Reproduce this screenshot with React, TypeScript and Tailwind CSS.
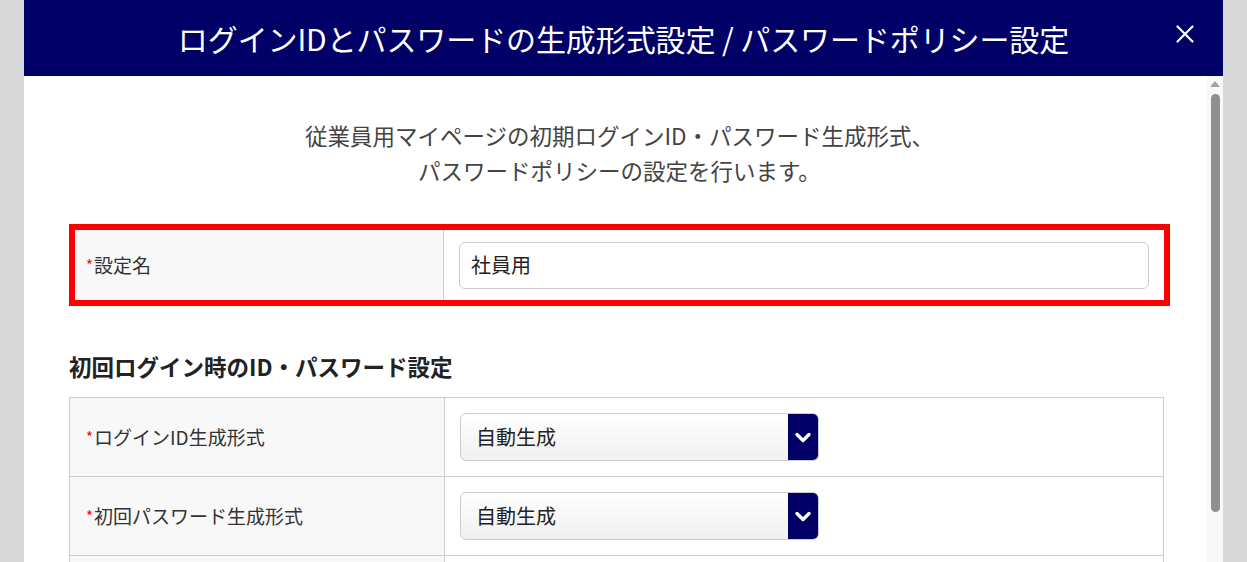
const FONT = "font-['Noto_Sans_CJK_JP','Noto_Sans',sans-serif]";

const Required = () => <span className="mr-[1px] align-[3px] text-[15px] text-[#ff0000]">*</span>;

const SelectBox = ({ value }: { value: string }) => (
  <div className="flex h-[48px] w-[359px] overflow-hidden rounded-[6px] border border-[#cccccc] bg-linear-to-b from-white to-[#f0f0f0]">
    <div className="flex flex-1 items-center pl-[15px] text-[20px] text-[#222]">{value}</div>
    <div className="flex w-[30px] items-center justify-center bg-[#000066]">
      <svg viewBox="0 0 18 18" className="h-[18px] w-[18px]" fill="none" stroke="white" strokeWidth="3.4" strokeLinecap="round" strokeLinejoin="round">
        <path d="M3 6.5l6 6 6-6" />
      </svg>
    </div>
  </div>
);

const Row = ({ label, children, last }: { label?: string; children?: React.ReactNode; last?: boolean }) => (
  <div className={`flex h-[79px] ${last ? "" : "border-b border-[#cccccc]"}`}>
    <div className="flex w-[375px] items-center border-r border-[#cccccc] bg-[#f8f8f8] pl-[16px] text-[19px] text-[#333]">
      {label && <Required />}
      {label}
    </div>
    <div className="flex flex-1 items-center pl-[15px]">{children}</div>
  </div>
);

export default function App() {
  return (
    <div className={`flex h-[562px] w-full overflow-hidden bg-[#d9d9d9] px-[24px] ${FONT}`}>
      <div className="flex w-[1200px] flex-col bg-white">
        {/* Header */}
        <div className="relative flex h-[76px] shrink-0 items-center justify-center bg-[#000066]">
          <h1 className="text-[30px] tracking-[-0.1px] text-white">ログインIDとパスワードの生成形式設定 / パスワードポリシー設定</h1>
          <button className="absolute right-[28px] top-[24px] text-white">
            <svg viewBox="0 0 20 20" className="h-[20px] w-[20px]" fill="none" stroke="white" strokeWidth="2.2" strokeLinecap="round">
              <path d="M2.5 2.5l15 15M17.5 2.5l-15 15" />
            </svg>
          </button>
        </div>

        {/* Body */}
        <div className="flex min-h-0 flex-1">
          <div className="flex-1 overflow-hidden pl-[45px] pr-[37px] pt-[42px]">
            <p className="text-center text-[22.5px] leading-[35px] text-[#444]">
              従業員用マイページの初期ログインID・パスワード生成形式、
              <br />
              パスワードポリシーの設定を行います。
            </p>

            <div className="mt-[36px] border-[6px] border-[#ff0000]">
              <div className="flex h-[70px]">
                <div className="flex w-[369px] items-center border-r border-[#cccccc] bg-[#f8f8f8] pl-[11px] text-[19px] text-[#333]">
                  <Required />
                  設定名
                </div>
                <div className="flex flex-1 items-center pl-[15px] pr-[15px]">
                  <div className="flex h-[47px] w-full items-center rounded-[6px] border border-[#cccccc] bg-white pl-[11px] text-[20px] text-[#222]">
                    社員用
                  </div>
                </div>
              </div>
            </div>

            <h2 className="mt-[45px] text-[22.5px] font-bold leading-[30px] text-[#222]">初回ログイン時のID・パスワード設定</h2>

            <div className="mr-[6px] mt-[16px] border border-[#cccccc]">
              <Row label="ログインID生成形式">
                <SelectBox value="自動生成" />
              </Row>
              <Row label="初回パスワード生成形式">
                <SelectBox value="自動生成" />
              </Row>
              <Row last />
            </div>
          </div>

          {/* Scrollbar */}
          <div className="flex w-[16px] shrink-0 flex-col items-center bg-[#f8f8f8] pt-[5px]">
            <div className="h-0 w-0 border-x-[5px] border-b-[6px] border-x-transparent border-b-[#a3a3a3]" />
            <div className="mt-[7px] h-[418px] w-[9px] rounded-full bg-[#8f8f8f]" />
          </div>
        </div>
      </div>
    </div>
  );
}
